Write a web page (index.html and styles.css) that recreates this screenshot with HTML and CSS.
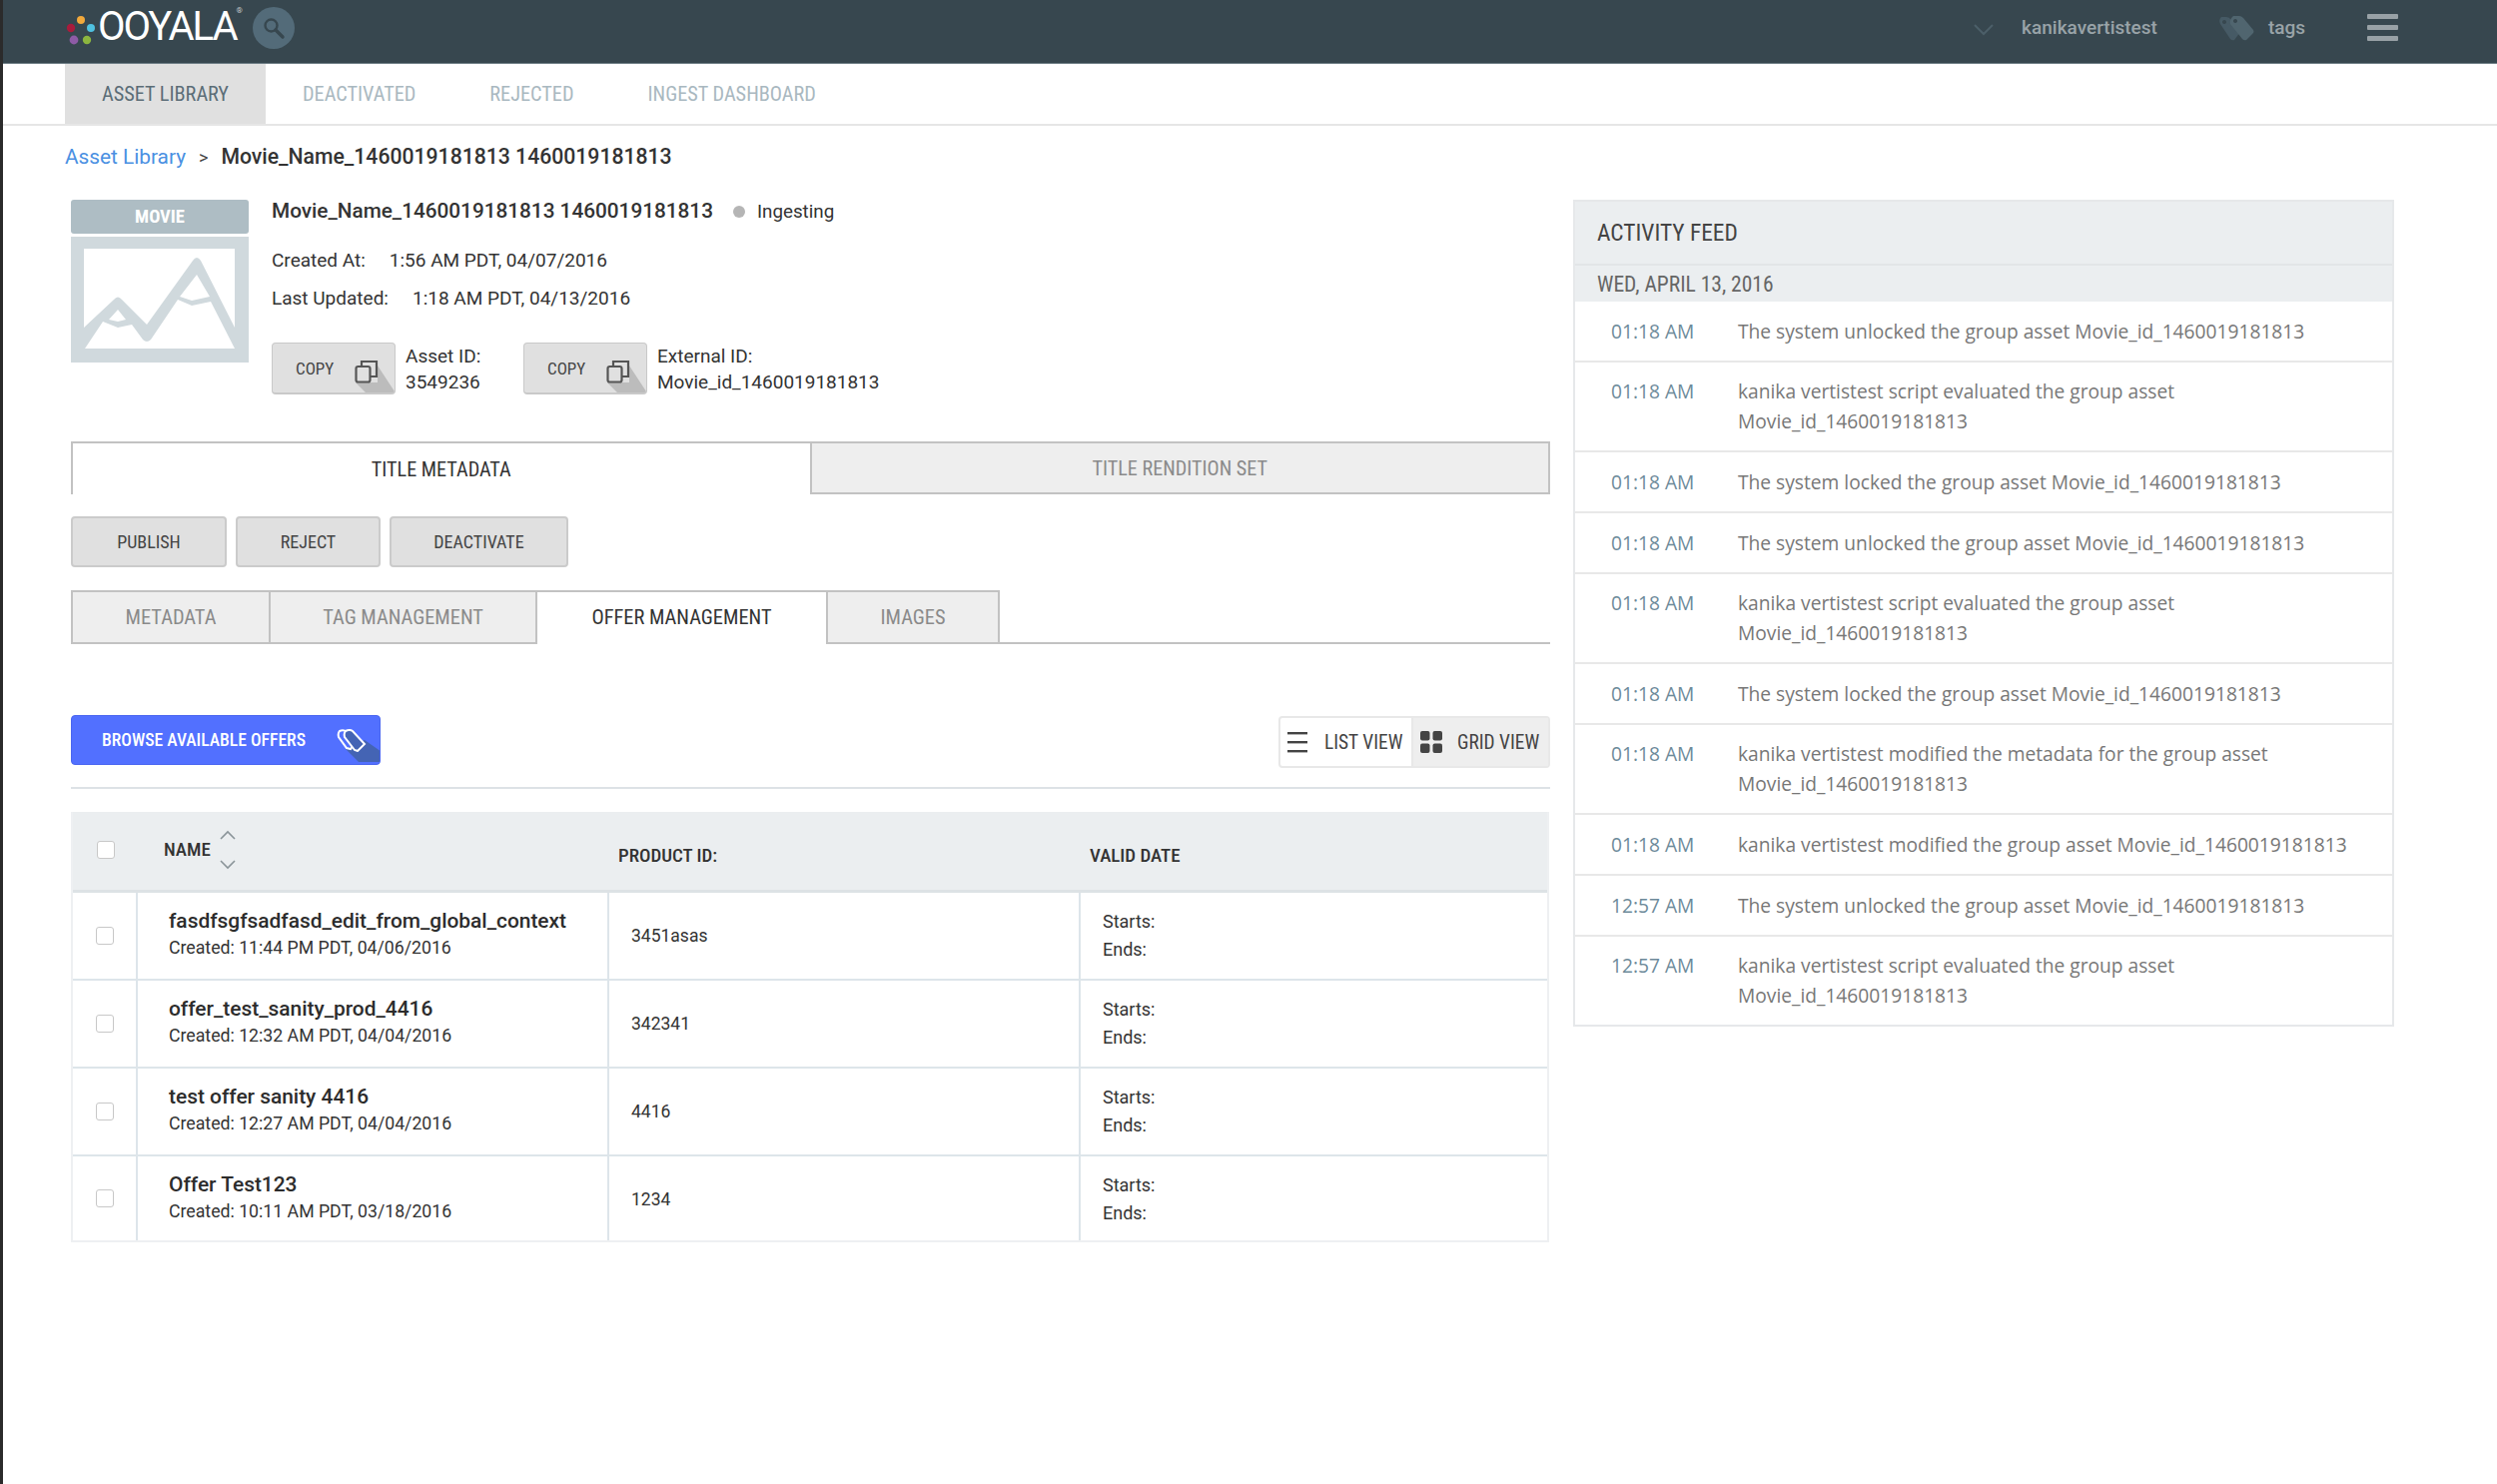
FILE: index.html
```html
<!DOCTYPE html>
<html lang="en">
<head>
<meta charset="utf-8">
<title>Ooyala Asset Library</title>
<link rel="stylesheet" href="styles.css">
</head>
<body>
<header class="topbar">
  <div class="brand">
    <svg class="logo-dots" width="30" height="30" viewBox="0 0 30 30"><circle cx="15" cy="5" r="4" fill="#f2a93b"/><circle cx="5" cy="13" r="4.2" fill="#a81c3c"/><circle cx="25" cy="13" r="4" fill="#4fc1e0"/><circle cx="8" cy="25" r="4.4" fill="#8e5ba6"/><circle cx="21" cy="25" r="4.2" fill="#8cb63f"/></svg>
    <span class="logo-text">OOYALA<sup class="reg">®</sup></span>
    <span class="search-circle"><svg width="24" height="24" viewBox="0 0 24 24" fill="none" stroke="#37474f" stroke-width="2.4"><circle cx="9.5" cy="9.5" r="6"/><path d="M14 14l7 7" stroke-width="3.4" stroke-linecap="round"/></svg></span>
  </div>
  <div class="user-area">
    <svg class="chev" width="20" height="12" viewBox="0 0 20 12" fill="none" stroke="#4c5f69" stroke-width="2"><path d="M1 1l9 9 9-9"/></svg>
    <span class="user-name">kanikavertistest</span>
    <svg class="tags-icon" width="36" height="26" viewBox="0 0 36 26"><path fill-rule="evenodd" d="M3 2h5q3 0 5 3l9 12-6 8q-2 1-4-1L2 9q-2-4 1-7zm3 3a2 2 0 1 0 .01 0z" fill="#465a65"/><path fill-rule="evenodd" d="M15 1h6q2 0 4 2l10 12q1 2 0 3l-7 7q-2 1-4-1L12 9q-1-5 3-8zm2 3a2 2 0 1 0 .01 0z" fill="#50656f"/></svg>
    <span class="user-name">tags</span>
    <span class="burger"><i></i><i></i><i></i></span>
  </div>
</header>

<nav class="mainnav">
  <a class="navtab active">ASSET LIBRARY</a>
  <a class="navtab">DEACTIVATED</a>
  <a class="navtab">REJECTED</a>
  <a class="navtab">INGEST DASHBOARD</a>
</nav>

<div class="crumbs">
  <a class="crumb-link">Asset Library</a><span class="crumb-sep">&gt;</span><span class="crumb-cur">Movie_Name_1460019181813 1460019181813</span>
</div>

<main class="layout">
  <section class="left">
    <div class="asset">
      <div class="thumb">
        <div class="badge">MOVIE</div>
        <svg class="poster" width="178" height="126" viewBox="0 0 178 126"><rect width="178" height="126" fill="#d0d9dd"/><rect x="13" y="12" width="151" height="100" fill="#fff"/><path d="M13 91L43 63Q47 58 51 63L76 88 122 24Q126 18 130 24L164 91V112H13z" fill="#d0d9dd"/><path d="M14 112L32 85 47 91 61 88 72 103Q76 107 80 103L107 63 121 69 140 65 164 112z" fill="#fff"/><path d="M126 38L139 60 121 64 109 60zM47 73L55 83 47 85 38 83z" fill="#fff"/></svg>
      </div>
      <div class="asset-info">
        <div class="asset-title"><span class="asset-name">Movie_Name_1460019181813 1460019181813</span><span class="dot"></span><span class="status">Ingesting</span></div>
        <div class="meta meta-first"><span class="meta-label">Created At:</span>1:56 AM PDT, 04/07/2016</div>
        <div class="meta"><span class="meta-label">Last Updated:</span>1:18 AM PDT, 04/13/2016</div>
        <div class="ids">
          <button class="copy"><span class="copy-shadow"></span><span class="copy-text">COPY</span><svg class="copy-icon" width="24" height="24" viewBox="0 0 24 24" fill="none" stroke="#555" stroke-width="2.2"><rect x="1.5" y="7" width="14" height="15.5" rx="2"/><path d="M7 7V2h15v15h-6"/></svg></button>
          <div class="id-block id-first">Asset ID:<br>3549236</div>
          <button class="copy"><span class="copy-shadow"></span><span class="copy-text">COPY</span><svg class="copy-icon" width="24" height="24" viewBox="0 0 24 24" fill="none" stroke="#555" stroke-width="2.2"><rect x="1.5" y="7" width="14" height="15.5" rx="2"/><path d="M7 7V2h15v15h-6"/></svg></button>
          <div class="id-block">External ID:<br>Movie_id_1460019181813</div>
        </div>
      </div>
    </div>

    <div class="big-tabs">
      <div class="big-tab on">TITLE METADATA</div>
      <div class="big-tab">TITLE RENDITION SET</div>
    </div>

    <div class="actions">
      <button class="act w-publish">PUBLISH</button>
      <button class="act w-reject">REJECT</button>
      <button class="act w-deact">DEACTIVATE</button>
    </div>

    <div class="sub-tabs">
      <div class="sub-tab w-meta">METADATA</div>
      <div class="sub-tab w-tag">TAG MANAGEMENT</div>
      <div class="sub-tab on w-offer">OFFER MANAGEMENT</div>
      <div class="sub-tab w-img">IMAGES</div>
    </div>

    <div class="toolbar">
      <button class="browse"><span class="browse-shadow"></span><span class="browse-text">BROWSE AVAILABLE OFFERS</span><svg class="browse-icon" width="30" height="23" viewBox="0 0 30 23" stroke="#fff" stroke-width="2"><path d="M3 2Q7 0 10 3L18 14 14 20 10 19 2 8Q1 4 3 2z" fill="none"/><path d="M9 2Q13 0 16 2L28 15 21 22 18 21 8 8Q7 4 9 2z" fill="#4464b4"/></svg></button>
      <div class="views">
        <div class="view">
          <svg width="22" height="22" viewBox="0 0 22 22" fill="#444"><rect y="1" width="20" height="2.4"/><rect y="10" width="20" height="2.4"/><rect y="19" width="20" height="2.4"/></svg>
          <span class="view-text">LIST VIEW</span>
        </div>
        <div class="view grid-on">
          <svg width="22" height="22" viewBox="0 0 22 22" fill="#444"><rect width="9.5" height="9.5" rx="2"/><rect x="12.5" width="9.5" height="9.5" rx="2"/><rect y="12.5" width="9.5" height="9.5" rx="2"/><rect x="12.5" y="12.5" width="9.5" height="9.5" rx="2"/></svg>
          <span class="view-text">GRID VIEW</span>
        </div>
      </div>
    </div>

    <div class="table">
      <div class="thead">
        <div class="c-check"><span class="box"></span></div>
        <div class="th-name">NAME
          <svg class="sort" width="18" height="40" viewBox="0 0 18 40" fill="none" stroke="#8a9499" stroke-width="1.6"><path d="M2 9l7-7 7 7M2 31l7 7 7-7"/></svg>
        </div>
        <div class="th">PRODUCT ID:</div>
        <div class="th">VALID DATE</div>
      </div>
      <div class="row">
        <div class="c-check"><span class="box"></span></div>
        <div class="c-name"><div class="o-name">fasdfsgfsadfasd_edit_from_global_context</div><div class="o-date">Created: 11:44 PM PDT, 04/06/2016</div></div>
        <div class="c-id">3451asas</div>
        <div class="c-date">Starts:<br>Ends:</div>
      </div>
      <div class="row">
        <div class="c-check"><span class="box"></span></div>
        <div class="c-name"><div class="o-name">offer_test_sanity_prod_4416</div><div class="o-date">Created: 12:32 AM PDT, 04/04/2016</div></div>
        <div class="c-id">342341</div>
        <div class="c-date">Starts:<br>Ends:</div>
      </div>
      <div class="row">
        <div class="c-check"><span class="box"></span></div>
        <div class="c-name"><div class="o-name">test offer sanity 4416</div><div class="o-date">Created: 12:27 AM PDT, 04/04/2016</div></div>
        <div class="c-id">4416</div>
        <div class="c-date">Starts:<br>Ends:</div>
      </div>
      <div class="row last">
        <div class="c-check"><span class="box"></span></div>
        <div class="c-name"><div class="o-name">Offer Test123</div><div class="o-date">Created: 10:11 AM PDT, 03/18/2016</div></div>
        <div class="c-id">1234</div>
        <div class="c-date">Starts:<br>Ends:</div>
      </div>
    </div>
  </section>

  <aside class="feed">
    <div class="feed-head">ACTIVITY FEED</div>
    <div class="feed-date">WED, APRIL 13, 2016</div>
    <div class="item"><span class="time">01:18 AM</span><span class="txt">The system unlocked the group asset Movie_id_1460019181813</span></div>
    <div class="item"><span class="time">01:18 AM</span><span class="txt">kanika vertistest script evaluated the group asset<br>Movie_id_1460019181813</span></div>
    <div class="item"><span class="time">01:18 AM</span><span class="txt">The system locked the group asset Movie_id_1460019181813</span></div>
    <div class="item"><span class="time">01:18 AM</span><span class="txt">The system unlocked the group asset Movie_id_1460019181813</span></div>
    <div class="item"><span class="time">01:18 AM</span><span class="txt">kanika vertistest script evaluated the group asset<br>Movie_id_1460019181813</span></div>
    <div class="item"><span class="time">01:18 AM</span><span class="txt">The system locked the group asset Movie_id_1460019181813</span></div>
    <div class="item"><span class="time">01:18 AM</span><span class="txt">kanika vertistest modified the metadata for the group asset<br>Movie_id_1460019181813</span></div>
    <div class="item"><span class="time">01:18 AM</span><span class="txt">kanika vertistest modified the group asset Movie_id_1460019181813</span></div>
    <div class="item"><span class="time">12:57 AM</span><span class="txt">The system unlocked the group asset Movie_id_1460019181813</span></div>
    <div class="item"><span class="time">12:57 AM</span><span class="txt">kanika vertistest script evaluated the group asset<br>Movie_id_1460019181813</span></div>
  </aside>
</main>
</body>
</html>
```
FILE: styles.css
```css
* { box-sizing: border-box; }
html, body { margin: 0; padding: 0; }
body {
  min-height: 1486px;
  background: #fff;
  border-left: 3px solid #2b2b2b;
  font-family: Roboto, "Liberation Sans", sans-serif;
  color: #333;
  font-size: 19px;
}
button { font-family: inherit; cursor: pointer; padding: 0; }

/* condensed caps */
.navtab, .badge, .copy-text, .big-tab, .act, .sub-tab, .browse-text, .view-text, .th, .th-name, .feed-head, .feed-date {
  font-family: "Roboto Condensed", "Liberation Sans Narrow", Roboto, sans-serif;
}

.topbar {
  height: 64px;
  background: #37474f;
  border-bottom: 1px solid #6d7d85;
  display: flex;
  justify-content: space-between;
  align-items: center;
  padding: 0 99px 0 63px;
}
.brand { display: flex; align-items: center; }
.logo-dots { margin-top: -4px; }
.logo-text { color: #fff; font-size: 40px; font-weight: 400; letter-spacing: -2px; margin-left: 2px; line-height: 1; margin-top: -9px; }
.reg { font-size: 8px; vertical-align: top; letter-spacing: 0; color: #ccc; }
.search-circle {
  width: 42px; height: 42px; border-radius: 50%; background: #536b79;
  display: flex; align-items: center; justify-content: center; margin-left: 10px; margin-top: -7px;
}
.user-area { display: flex; align-items: center; margin-top: -8px; }
.chev { margin-top: 4px; }
.user-name { color: #99a3a8; font-size: 19px; font-weight: 500; margin-left: 28px; }
.tags-icon { margin-left: 61px; }
.tags-icon + .user-name { margin-left: 14px; }
.burger { display: flex; flex-direction: column; gap: 6px; margin-left: 62px; }
.burger i { display: block; width: 31px; height: 5px; border-radius: 1px; background: #98a1a6; }

.mainnav {
  height: 62px;
  border-bottom: 2px solid #e6e6e6;
  display: flex;
  padding-left: 62px;
}
.navtab { display: flex; align-items: center; padding: 0 37px; font-size: 20.3px; color: #a9b8c0; }
.navtab.active { background: #e0e0e0; color: #5b6d77; }

.crumbs { height: 62px; padding: 19px 0 0 62px; font-size: 20.8px; line-height: 24px; }
.crumb-link { color: #4a90e2; }
.crumb-sep { margin: 0 13px; color: #444; font-size: 18px; }
.crumb-cur { font-weight: 500; color: #333; font-size: 21.2px; }

.layout { display: flex; padding: 12px 0 0 68px; align-items: flex-start; }
.left { width: 1481px; }

.asset { display: flex; height: 229px; }
.thumb { width: 178px; margin-right: 23px; }
.badge {
  height: 34px; background: #aebdc4; border-radius: 3px; color: #fff; font-size: 18.5px; font-weight: 700;
  display: flex; align-items: center; justify-content: center; margin-bottom: 3px;
}
.poster { display: block; }
.asset-info { font-size: 19px; }
.asset-title { display: flex; align-items: center; height: 22px; }
.asset-name { font-weight: 500; font-size: 20.75px; }
.dot { width: 12px; height: 12px; border-radius: 50%; background: #b5b5b5; margin: 2px 12px 0 20px; }
.status { font-size: 18.8px; margin-top: 2px; }
.meta { margin-top: 16px; line-height: 22px; }
.meta-first { margin-top: 28px; }
.meta-label { margin-right: 24px; }
.ids { display: flex; margin-top: 33px; align-items: flex-start; }
.copy {
  position: relative; width: 124px; height: 52px; background: #e0e0e0; border: 1px solid #c9c9c9; border-bottom-width: 2px;
  border-radius: 4px; overflow: hidden; display: flex; align-items: center; color: #444;
}
.copy-text { font-size: 17px; margin-left: 23px; position: relative; }
.copy-icon { position: absolute; left: 82px; top: 16px; }
.copy-shadow {
  position: absolute; inset: 0; background: #bcbcbc;
  clip-path: polygon(105px 22px, 124px 51px, 124px 52px, 96px 52px, 83px 39px, 105px 39px);
}
.id-block { line-height: 25.5px; margin-left: 10px; margin-top: 1px; }
.id-first { width: 118px; }

.big-tabs { display: flex; margin-top: 13px; height: 53px; }
.big-tab {
  flex: 1; display: flex; align-items: center; justify-content: center;
  background: #eee; border: 2px solid #c2c2c2; color: #8a8a8a; font-size: 20.2px;
}
.big-tab.on { background: #fff; color: #333; border-bottom: 0; border-right: 0; }

.actions { display: flex; gap: 9px; margin-top: 22px; }
.act {
  height: 51px; background: #e0e0e0; border: 2px solid #cbcbcb; border-radius: 4px; color: #444; font-size: 18px;
}
.w-publish { width: 156px; }
.w-reject { width: 145px; }
.w-deact { width: 179px; }

.sub-tabs { display: flex; margin-top: 23px; height: 54px; border-bottom: 2px solid #c2c2c2; }
.sub-tab {
  height: 54px; display: flex; align-items: center; justify-content: center;
  background: #eee; border: 2px solid #c2c2c2; border-left: 0; color: #8a8a8a; font-size: 20.4px;
}
.sub-tab:first-child { border-left: 2px solid #c2c2c2; }
.sub-tab.on { background: #fff; color: #333; border-right: 0; border-bottom-color: #fff; }
.sub-tab.on + .sub-tab { border-left: 2px solid #c2c2c2; }
.w-meta { width: 200px; }
.w-tag { width: 267px; }
.w-offer { width: 289px; }
.w-img { width: 174px; }

.toolbar {
  display: flex; justify-content: space-between; align-items: flex-start;
  margin-top: 71px; height: 74px; border-bottom: 2px solid #dde2e6;
}
.browse {
  position: relative; width: 310px; height: 50px; background: #5270ff; border: 1px solid #4a66f0; border-radius: 4px;
  color: #fff; display: flex; align-items: center; overflow: hidden;
}
.browse-text { font-size: 17.6px; margin-left: 30px; position: relative; font-weight: 500; }
.browse-icon { position: absolute; left: 265px; top: 13px; }
.browse-shadow {
  position: absolute; inset: 0; background: #4464b4;
  clip-path: polygon(293px 24px, 310px 36px, 310px 46px, 287px 46px, 274px 33px);
}
.views {
  display: flex; width: 272px; height: 52px; border: 2px solid #e8e8e8; border-radius: 4px; margin-top: 1px;
}
.view { display: flex; align-items: center; height: 100%; color: #444; }
.view:first-child { width: 131px; padding-left: 7px; }
.view .view-text { font-size: 19.4px; margin-left: 15px; }
.grid-on { flex: 1; background: #eee; border-left: 2px solid #e8e8e8; padding-left: 7px; }

.table { margin-top: 23px; width: 1480px; border-left: 2px solid #eef0f2; border-bottom: 2px solid #eef0f2; border-right: 2px solid #eef0f2; }
.thead, .row { display: grid; grid-template-columns: 65px 472px 472px 1fr; }
.thead { height: 81px; background: #ebeef0; border-bottom: 3px solid #dde2e5; align-items: center; }
.c-check { display: flex; align-items: center; justify-content: center; height: 100%; }
.box { width: 18px; height: 18px; border: 1px solid #c8c8c8; border-radius: 3px; background: #fff; display: block; }
.thead .c-check { margin-top: -2px; }
.th-name { display: flex; align-items: center; font-size: 19px; font-weight: 500; padding-left: 26px; margin-top: -3px; color: #333; }
.sort { margin-left: 8px; }
.th { font-size: 19px; font-weight: 500; padding-left: 9px; margin-top: 9px; color: #333; }
.row { height: 88px; border-bottom: 2px solid #dde5ea; }
.row.last { border-bottom: 0; height: 84px; }
.c-check, .c-name, .c-id { border-right: 2px solid #dde5ea; }
.thead .c-check { border-right: 0; }
.c-name { padding: 15px 0 0 31px; }
.o-name { font-size: 20.9px; font-weight: 500; line-height: 26px; color: #2c2c2c; }
.o-date { font-size: 17.7px; line-height: 28px; color: #333; }
.c-id { padding: 30px 0 0 22px; font-size: 17.5px; line-height: 26px; }
.c-date { padding: 15px 0 0 22px; font-size: 18px; line-height: 28px; }

.feed { width: 822px; margin-left: 23px; border: 2px solid #e6e8ea; }
.feed-head { height: 64px; background: #ebeef0; display: flex; align-items: center; padding-left: 22px; font-size: 23.4px; color: #444; border-bottom: 2px solid #e2e5e7; }
.feed-date { height: 36px; background: #ebeef0; display: flex; align-items: center; padding-left: 22px; font-size: 21.5px; color: #666; }
.item { display: flex; padding: 14.6px 0 14.6px 36px; border-top: 2px solid #e8e8e8; font-family: "Open Sans", sans-serif; font-size: 19.2px; line-height: 29.6px; }
.feed-date + .item { border-top: 0; }
.time { width: 127px; flex: none; color: #6d8a9a; }
.txt { color: #777; }
```
